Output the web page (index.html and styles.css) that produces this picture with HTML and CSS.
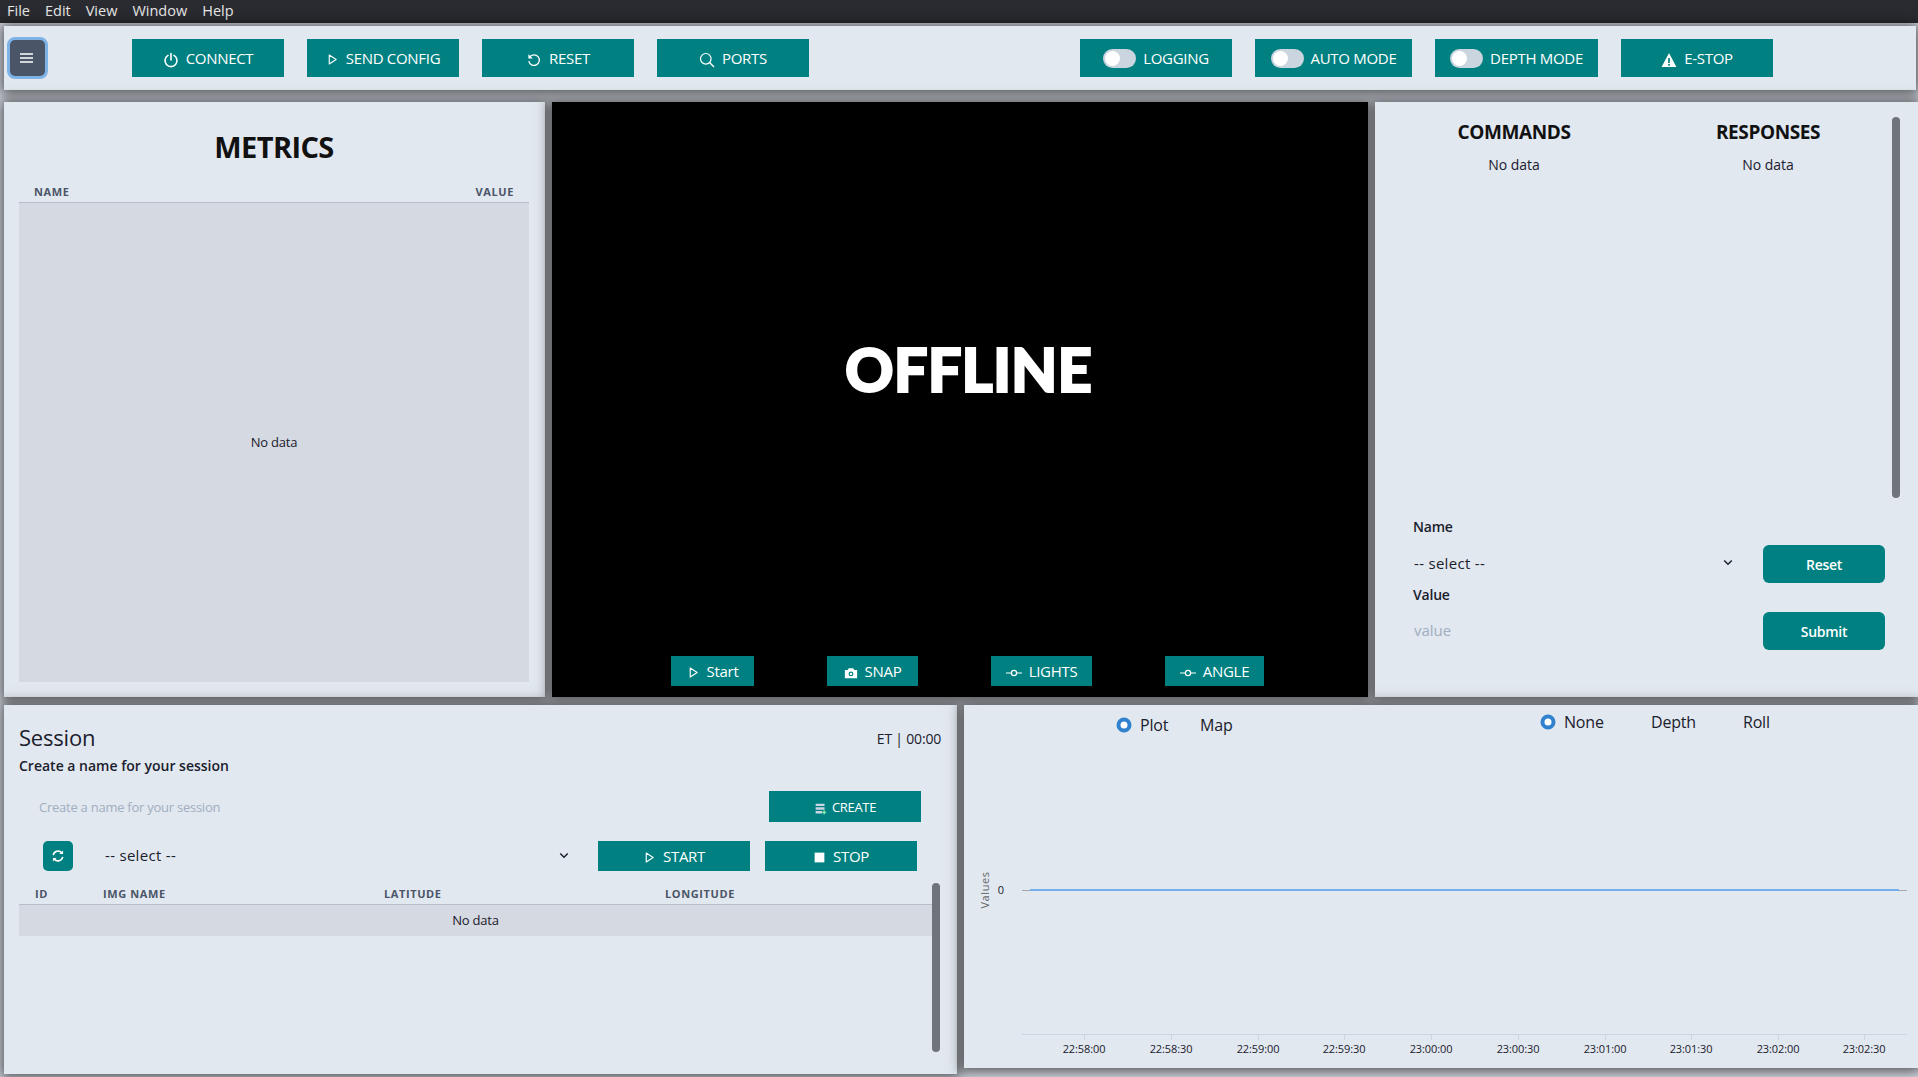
FILE: index.html
```html
<!DOCTYPE html>
<html lang="en">
<head>
  <meta charset="UTF-8" />
  <title>Vehicle Console</title>
  <link rel="stylesheet" href="styles.css">
</head>
<body>
  <svg class="icon-defs" width="0" height="0">
    <symbol id="i-play" viewBox="0 0 16 16"><path fill="none" stroke="currentColor" stroke-width="1.4" stroke-linejoin="round" d="M4 2.500v11l8.500-5.500z"/></symbol>
    <symbol id="i-commit" viewBox="0 0 16 16"><circle cx="8" cy="8" r="2.600" fill="none" stroke="currentColor" stroke-width="1.2"/><path stroke="currentColor" stroke-width="1.2" d="M0 8h5.400M10.600 8H16"/></symbol>
  </svg>

  <div class="menubar">
    <span>File</span><span>Edit</span><span>View</span><span>Window</span><span>Help</span>
  </div>

  <header class="toolbar">
    <button class="menu-btn" aria-label="menu">
      <svg class="menu-ico" width="13" height="12" viewBox="0 0 13 12"><path stroke="#fff" stroke-width="1.5" d="M0 2h13M0 6h13M0 10h13"/></svg>
    </button>
    <div class="tool-group">
      <button class="btn">
        <svg class="ico" viewBox="0 0 16 16"><path fill="none" stroke="currentColor" stroke-width="1.6" stroke-linecap="round" d="M8 1.500v6.500M5 3.400a6 6 0 1 0 6 0"/></svg>CONNECT
      </button>
      <button class="btn"><svg class="ico ico-sm"><use href="#i-play"/></svg>SEND CONFIG</button>
      <button class="btn">
        <svg class="ico" viewBox="0 0 16 16"><path fill="none" stroke="currentColor" stroke-width="1.3" d="M3.600 5.200A5.300 5.300 0 1 1 2.800 9"/><path fill="currentColor" d="M2.400 2.200v4.400h4.400z"/></svg>RESET
      </button>
      <button class="btn">
        <svg class="ico" viewBox="0 0 16 16"><circle cx="6.800" cy="6.800" r="5.300" fill="none" stroke="currentColor" stroke-width="1.2"/><path stroke="currentColor" stroke-width="1.4" d="M10.600 10.600l4.400 4.400"/></svg>PORTS
      </button>
    </div>
    <div class="tool-group tool-right">
      <button class="btn btn-log"><span class="toggle"></span>LOGGING</button>
      <button class="btn btn-auto"><span class="toggle"></span>AUTO MODE</button>
      <button class="btn btn-depth"><span class="toggle"></span>DEPTH MODE</button>
      <button class="btn">
        <svg class="ico" viewBox="0 0 16 16"><path fill="currentColor" d="M8 1L.6 15h14.800z"/><path stroke="#008080" stroke-width="1.700" d="M8 6v5M8 12v1.700"/></svg>E-STOP
      </button>
    </div>
  </header>

  <main class="row-top">
    <section class="panel metrics">
      <h1>METRICS</h1>
      <div class="metrics-head"><span>NAME</span><span>VALUE</span></div>
      <div class="metrics-body">No data</div>
    </section>

    <section class="video">
      <div class="offline">OFFLINE</div>
      <div class="video-actions">
        <button class="btn btn-video"><svg class="ico ico-sm"><use href="#i-play"/></svg>Start</button>
        <button class="btn btn-video">
          <svg class="ico ico-cam" viewBox="0 0 16 16"><path fill="currentColor" fill-rule="evenodd" d="M1 4.500h3.200L5.500 2.500h5l1.300 2H15V14H1zM8 6.200a2.800 2.800 0 1 0 0 5.600 2.800 2.800 0 0 0 0-5.600zM8 7.600a1.400 1.400 0 1 1 0 2.800 1.400 1.400 0 0 1 0-2.800z"/></svg>SNAP
        </button>
        <button class="btn btn-video"><svg class="ico"><use href="#i-commit"/></svg>LIGHTS</button>
        <button class="btn btn-video"><svg class="ico"><use href="#i-commit"/></svg>ANGLE</button>
      </div>
    </section>

    <section class="panel commands">
      <div class="cmd-log">
        <div class="cmd-col cmd-col-a">
          <h2>COMMANDS</h2>
          <p>No data</p>
        </div>
        <div class="cmd-col cmd-col-b">
          <h2>RESPONSES</h2>
          <p>No data</p>
        </div>
        <div class="cmd-scroll"></div>
      </div>
      <form class="cmd-form">
        <div class="cmd-fields">
          <label>Name</label>
          <div class="select-wrap cmd-select">
            <select><option>-- select --</option></select>
            <svg class="chevron" viewBox="0 0 12 8"><path fill="none" stroke="currentColor" stroke-width="1.800" d="M1.500 1.500L6 6l4.500-4.500"/></svg>
          </div>
          <label>Value</label>
          <input class="cmd-input" placeholder="value">
        </div>
        <div class="cmd-btns">
          <button type="button" class="btn btn-round">Reset</button>
          <button type="button" class="btn btn-round">Submit</button>
        </div>
      </form>
    </section>
  </main>

  <div class="row-bottom">
    <section class="panel session">
      <div class="session-top">
        <h3>Session</h3>
        <span class="timer">ET | 00:00</span>
      </div>
      <div class="session-sub">Create a name for your session</div>
      <div class="session-create">
        <input class="session-input" placeholder="Create a name for your session">
        <button class="btn btn-create">
          <svg class="ico ico-db" viewBox="0 0 16 16"><path fill="#cbd5e1" d="M2 2h11v3H2zM2 6.500h11v3H2zM2 11h8v3H2z"/><path stroke="#86efac" stroke-width="1.600" d="M12.500 10v5.500M10 12.800h5"/></svg>CREATE
        </button>
      </div>
      <div class="session-run">
        <button class="sync-btn" aria-label="refresh">
          <svg width="14" height="14" viewBox="0 0 16 16"><path fill="none" stroke="#fff" stroke-width="1.800" d="M2.600 7a5.500 5.500 0 0 1 9.600-2.600M13.400 9a5.500 5.500 0 0 1-9.600 2.600"/><path fill="#fff" d="M13.800 1.600v4.200H9.600zM2.200 14.400v-4.200h4.200z"/></svg>
        </button>
        <div class="select-wrap run-select">
          <select><option>-- select --</option></select>
          <svg class="chevron" viewBox="0 0 12 8"><path fill="none" stroke="currentColor" stroke-width="1.800" d="M1.500 1.500L6 6l4.500-4.500"/></svg>
        </div>
        <button class="btn btn-run"><svg class="ico ico-sm"><use href="#i-play"/></svg>START</button>
        <button class="btn btn-run">
          <svg class="ico ico-sm" viewBox="0 0 16 16"><rect x="2" y="2" width="12" height="12" fill="currentColor"/></svg>STOP
        </button>
      </div>
      <div class="session-table">
        <div class="table-wrap">
          <div class="table-head"><span class="c-id">ID</span><span class="c-img">IMG NAME</span><span class="c-lat">LATITUDE</span><span class="c-lon">LONGITUDE</span></div>
          <div class="table-empty">No data</div>
        </div>
        <div class="table-scroll"></div>
      </div>
    </section>

    <section class="panel chart">
      <svg class="chart-svg" width="954" height="363" viewBox="0 0 954 363">
        <g class="radio-label">
          <circle cx="160" cy="20" r="5.500" fill="#fff" stroke="#3182ce" stroke-width="4"/>
          <text x="176" y="26">Plot</text>
          <text x="236" y="26">Map</text>
          <circle cx="584" cy="17" r="5.500" fill="#fff" stroke="#3182ce" stroke-width="4"/>
          <text x="600" y="23">None</text>
          <text x="687" y="23">Depth</text>
          <text x="779" y="23">Roll</text>
        </g>
        <text class="axis-title" transform="translate(25 185) rotate(-90)" text-anchor="middle">Values</text>
        <text class="tick" x="40" y="189" text-anchor="end">0</text>
        <path stroke="#a3a8b0" d="M58 185.500h885"/>
        <path stroke="#74b0ee" stroke-width="2" d="M66 185h869"/>
        <path stroke="#cbd5e6" d="M58 329.500h885M120.500 329v6M207.500 329v6M294.500 329v6M380.500 329v6M467.500 329v6M554.500 329v6M641.500 329v6M727.500 329v6M814.500 329v6M900.500 329v6"/>
        <g class="tick" text-anchor="middle">
          <text x="120" y="348">22:58:00</text>
          <text x="207" y="348">22:58:30</text>
          <text x="294" y="348">22:59:00</text>
          <text x="380" y="348">22:59:30</text>
          <text x="467" y="348">23:00:00</text>
          <text x="554" y="348">23:00:30</text>
          <text x="641" y="348">23:01:00</text>
          <text x="727" y="348">23:01:30</text>
          <text x="814" y="348">23:02:00</text>
          <text x="900" y="348">23:02:30</text>
        </g>
      </svg>
    </section>
  </div>
</body>
</html>
```

FILE: styles.css
```css
* {
  box-sizing: border-box;
}
body {
  margin: 0;
  width: 1918px;
  height: 1077px;
  overflow: hidden;
  background: #d5d9e2;
  color: #1a202c;
  font-family: "Open Sans", "Noto Sans", sans-serif;
  font-size: 14px;
}
.icon-defs {
  position: absolute;
}
button, input, select {
  font-family: inherit;
}

.menubar {
  height: 23px;
  background: #2a2b30;
  color: #e8e8e8;
  font-size: 14.5px;
  line-height: 21px;
  display: flex;
  gap: 15px;
  padding-left: 7px;
}

.btn {
  background: #008080;
  color: #fff;
  border: none;
  font-size: 15px;
  letter-spacing: -0.3px;
  display: flex;
  align-items: center;
  justify-content: center;
  gap: 7px;
  padding: 0;
}
.ico {
  width: 16px;
  height: 16px;
  flex: none;
  margin-top: 3px;
}
.ico-sm {
  width: 13px;
  height: 13px;
}
.ico-cam {
  width: 14px;
  height: 14px;
}

.toolbar {
  height: 64px;
  margin: 3px 2px 12px 4px;
  background: #e2e8f0;
  display: flex;
  align-items: center;
  padding-left: 3px;
  position: relative;
  box-shadow: 0 1px 12px 3px rgba(0,0,0,0.6);
}
.menu-btn {
  width: 41px;
  height: 42px;
  background: #4a5568;
  border: 3px solid #7fb2e5;
  border-radius: 8px;
  display: flex;
  align-items: center;
  justify-content: center;
  padding: 0;
  margin-right: 84px;
}
.menu-ico {
  margin-right: 3px;
}
.tool-group {
  display: flex;
  gap: 23px;
}
.tool-group .btn {
  width: 152px;
  height: 38px;
}
.tool-right {
  margin-left: 271px;
}
.tool-group .btn-auto {
  width: 157px;
}
.tool-group .btn-depth {
  width: 163px;
}
.toggle {
  width: 33px;
  height: 19px;
  border-radius: 10px;
  background: #cbd5e0;
  display: block;
  position: relative;
  flex: none;
}
.toggle::after {
  content: "";
  position: absolute;
  left: 2px;
  top: 2px;
  width: 15px;
  height: 15px;
  border-radius: 50%;
  background: #fff;
}

.row-top {
  display: flex;
  gap: 7px;
  height: 595px;
  padding-left: 4px;
}
.panel {
  background: #e2e8f0;
  position: relative;
  box-shadow: 0 1px 12px 3px rgba(0,0,0,0.6);
}

.metrics {
  width: 541px;
  padding: 0 16px 15px 15px;
  display: flex;
  flex-direction: column;
}
.metrics h1 {
  margin: 25px 0 0;
  height: 40px;
  font-size: 29px;
  line-height: 40px;
  font-weight: 700;
  text-align: center;
  letter-spacing: -0.6px;
  color: #111;
}
.metrics-head {
  display: flex;
  justify-content: space-between;
  margin-top: 16px;
  padding: 0 15px;
  height: 20px;
  border-bottom: 1px solid #b8bec9;
  font-size: 11px;
  font-weight: 700;
  letter-spacing: 0.6px;
  line-height: 17px;
  color: #4a5568;
}
.metrics-body {
  flex: 1;
  background: #d5d9e2;
  display: flex;
  align-items: center;
  justify-content: center;
  padding-bottom: 2px;
  font-size: 13px;
  letter-spacing: -0.2px;
}

.video {
  width: 816px;
  background: #000;
  position: relative;
  display: flex;
  flex-direction: column;
  box-shadow: 0 1px 12px 3px rgba(0,0,0,0.6);
}
.offline {
  height: 554px;
  padding: 0 0 20px 17px;
  display: flex;
  align-items: center;
  justify-content: center;
  color: #fff;
  font-family: Lato, sans-serif;
  font-weight: 900;
  font-size: 60px;
  -webkit-text-stroke: 2px #fff;
}
.video-actions {
  display: flex;
  gap: 73px;
  padding-left: 119px;
}
.btn-video {
  height: 30px;
  padding: 0 15px;
}
.video-actions .btn:nth-child(1) { width: 83px; }
.video-actions .btn:nth-child(2) { width: 91px; }
.video-actions .btn:nth-child(3) { width: 101px; }
.video-actions .btn:nth-child(4) { width: 99px; }

.commands {
  flex: 1;
  display: flex;
  flex-direction: column;
}
.cmd-log {
  height: 415px;
  display: flex;
  padding-top: 15px;
  position: relative;
}
.cmd-col {
  text-align: center;
}
.cmd-col h2 {
  margin: 0;
  font-size: 19px;
  line-height: 30px;
  font-weight: 700;
  letter-spacing: -0.4px;
  color: #111;
}
.cmd-col p {
  margin: 8px 0 0;
  font-size: 14px;
  line-height: 20px;
}
.cmd-col-a {
  width: 180px;
  margin-left: 49px;
}
.cmd-col-b {
  width: 180px;
  margin-left: 74px;
}
.cmd-scroll {
  position: absolute;
  left: 517px;
  top: 15px;
  width: 8px;
  height: 381px;
  border-radius: 4px;
  background: #6f747b;
}
.cmd-form {
  display: flex;
  padding-left: 38px;
}
.cmd-fields {
  width: 350px;
  display: flex;
  flex-direction: column;
}
.cmd-fields label {
  font-size: 14px;
  font-weight: 600;
  line-height: 20px;
  letter-spacing: -0.2px;
  height: 24px;
}
.select-wrap {
  position: relative;
}
.select-wrap select {
  appearance: none;
  background: transparent;
  border: none;
  outline: none;
  width: 100%;
  height: 100%;
  font-size: 15px;
  letter-spacing: 0.3px;
  color: #1a202c;
  padding: 0 0 2px;
}
.chevron {
  position: absolute;
  width: 10px;
  height: 7px;
  top: 50%;
  margin-top: -4px;
  color: #1a202c;
}
.cmd-select {
  height: 40px;
  margin: 2px 0 2px;
}
.cmd-select select {
  padding: 0 0 0 1px;
}
.cmd-select .chevron {
  left: 310px;
}
.cmd-input {
  border: none;
  outline: none;
  background: transparent;
  height: 40px;
  font-size: 15px;
  padding: 2px 0 0 1px;
}
input::placeholder {
  color: #a0aec0;
  opacity: 1;
}
.cmd-btns {
  margin: 28px 0 0 0;
  display: flex;
  flex-direction: column;
  gap: 29px;
}
.btn-round {
  width: 122px;
  height: 38px;
  border-radius: 6px;
  font-weight: 600;
  font-size: 14px;
}

.row-bottom {
  display: flex;
  gap: 7px;
  margin-top: 8px;
  padding-left: 4px;
}

.session {
  width: 953px;
  height: 369px;
  padding: 0 16px 0 15px;
}
.session-top {
  display: flex;
  justify-content: space-between;
  align-items: center;
  height: 34px;
  margin-top: 16px;
}
.session-top h3 {
  margin: 0 0 2px;
  font-size: 22px;
  font-weight: 400;
  letter-spacing: -0.2px;
}
.timer {
  font-size: 14px;
  letter-spacing: -0.2px;
}
.session-sub {
  font-size: 14px;
  font-weight: 600;
  line-height: 22px;
}
.session-create {
  display: flex;
  align-items: center;
  margin-top: 14px;
  height: 31px;
}
.session-input {
  border: none;
  outline: none;
  background: transparent;
  width: 750px;
  padding: 0 0 0 20px;
  font-size: 13px;
  letter-spacing: -0.25px;
}
.btn-create {
  width: 152px;
  height: 31px;
  font-size: 13px;
  gap: 5px;
}
.ico-db {
  width: 13px;
  height: 13px;
}
.session-run {
  display: flex;
  align-items: center;
  height: 30px;
  margin-top: 19px;
}
.sync-btn {
  width: 30px;
  height: 30px;
  margin-left: 24px;
  background: #008080;
  border: none;
  border-radius: 5px;
  padding: 0;
  display: flex;
  align-items: center;
  justify-content: center;
}
.run-select {
  width: 525px;
  height: 30px;
  padding-left: 32px;
}
.run-select .chevron {
  left: 486px;
}
.btn-run {
  width: 152px;
  height: 30px;
}
.btn-run + .btn-run {
  margin-left: 15px;
}
.session-table {
  position: relative;
  margin-top: 12px;
}
.table-wrap {
  width: 913px;
}
.table-head {
  display: flex;
  height: 22px;
  border-bottom: 1px solid #b8bec9;
  font-size: 11px;
  font-weight: 700;
  letter-spacing: 0.6px;
  line-height: 22px;
  color: #4a5568;
}
.c-id { margin-left: 16px; width: 68px; }
.c-img { width: 281px; }
.c-lat { width: 281px; }
.table-empty {
  height: 31px;
  background: #d5d9e2;
  text-align: center;
  font-size: 13px;
  line-height: 31px;
  letter-spacing: -0.2px;
}
.table-scroll {
  position: absolute;
  left: 913px;
  top: 0;
  width: 8px;
  height: 169px;
  border-radius: 4px;
  background: #6f747b;
}

.chart {
  width: 954px;
  height: 363px;
}
.chart-svg {
  display: block;
}
.radio-label {
  font-size: 16px;
  letter-spacing: -0.2px;
  fill: #1a202c;
}
.axis-title {
  font-size: 11px;
  fill: #666;
  letter-spacing: 0.6px;
}
.tick {
  font-size: 11px;
  fill: #1a202c;
  letter-spacing: -0.1px;
}
```
